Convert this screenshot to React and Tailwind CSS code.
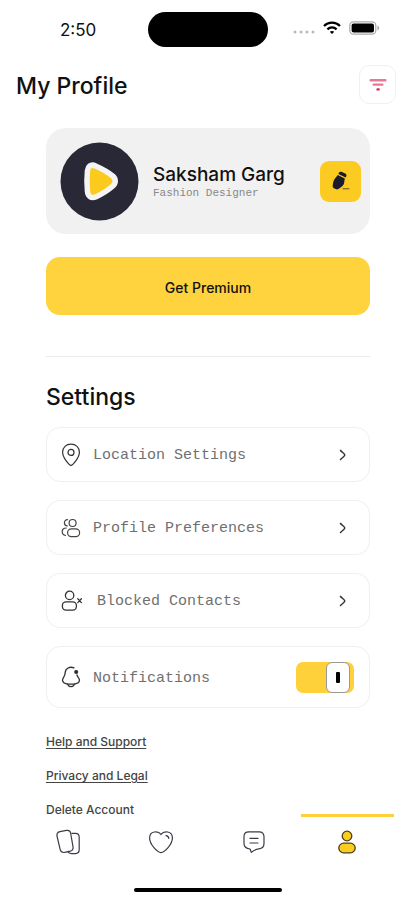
import React, { useState } from 'react';

const PinIcon = () => (
  <svg width="20" height="24" viewBox="0 0 20 24" fill="none" stroke="#333" strokeWidth="1.2">
    <path d="M10 22.3C8.4 22.3 1.6 14.8 1.6 9.2C1.6 4.4 5.2 1.2 10 1.2S18.4 4.4 18.4 9.2C18.4 14.8 11.6 22.3 10 22.3Z" />
    <circle cx="10" cy="9.4" r="3" />
  </svg>
);

const PeopleIcon = () => (
  <svg width="20" height="20" viewBox="0 0 20 20" fill="none" stroke="#444" strokeWidth="1.2" strokeLinecap="round">
    <circle cx="11.6" cy="5" r="3.5" />
    <rect x="6.6" y="10.8" width="12" height="7.8" rx="3.8" />
    <path d="M6.6 1.6C4.4 1.6 3.4 3.2 3.4 4.8C3.4 6.6 4.4 7.8 6.2 7.9" />
    <path d="M5.2 10C2.6 10 1.2 11.6 1.2 13.6C1.2 15.8 2.4 17.2 4.4 17.4" />
  </svg>
);

const BlockedIcon = () => (
  <svg width="24" height="22" viewBox="0 0 24 22" fill="none" stroke="#333" strokeWidth="1.3" strokeLinecap="round">
    <circle cx="8.6" cy="5.4" r="4.2" />
    <rect x="1.4" y="11.8" width="14" height="8.4" rx="3.6" />
    <path d="M16.8 8.8L20.4 12.6M20.4 8.8L16.8 12.6" />
  </svg>
);

const BellIcon = () => (
  <svg width="20" height="22" viewBox="0 0 20 22" fill="none" stroke="#333" strokeWidth="1.3" strokeLinecap="round">
    <path d="M13 1.8C8.6 .2 4.4 2.4 4.2 6.6C4.1 8.6 3.8 9.6 2.6 11.4C.6 14.4 1.6 16.8 4.8 17.6C8.2 18.4 11.8 18.4 15.2 17.6C18.4 16.8 19.4 14.4 17.4 11.6C16.6 10.4 16.2 9.8 16 9" />
    <path d="M6.4 18.2C8 21.4 12 21.4 13.6 18.2" />
    <circle cx="15.2" cy="6" r="1.4" fill="#222" />
  </svg>
);

const ChevronIcon = () => (
  <svg width="8" height="12" viewBox="0 0 8 12" fill="none" stroke="#333" strokeWidth="1.5">
    <path d="M1.2 1C2.4 3 5.8 4.6 5.8 6S2.4 9 1.2 11" />
  </svg>
);

const CardsIcon = () => (
  <svg width="26" height="26" viewBox="0 0 26 26" fill="none" stroke="#3b3b48" strokeWidth="1.2">
    <path d="M5 2.6L11.4 1.4C13.6 1 15.2 2 15.6 4L18 17.6C18.4 20 17.4 21.6 15.2 22.2L9.6 23.4C7.4 23.8 5.8 22.6 5.2 20.6L2 7C1.5 4.6 2.8 3 5 2.6Z" />
    <path d="M16.4 4.4H20.4C22.8 4.4 24.2 5.8 24.2 8.2V20.6C24.2 23.2 22.8 24.6 20.4 24.6H16.6C14.8 24.6 13.4 24 12.8 22.8" />
  </svg>
);

const HeartIcon = () => (
  <svg width="26" height="24" viewBox="0 0 26 24" fill="none" stroke="#3b3b48" strokeWidth="1.2" strokeLinecap="round">
    <path d="M13 4.4C10.4 .8 1.6 .4 1.6 8C1.6 14.4 9.4 22.6 13 22.6S24.4 14.4 24.4 8C24.4 .4 15.6 .8 13 4.4Z" />
    <path d="M18 5.6C19.6 5.8 20.6 6.8 20.8 8.4" />
  </svg>
);

const ChatIcon = () => (
  <svg width="24" height="24" viewBox="0 0 24 24" fill="none" stroke="#3b3b48" strokeWidth="1.2" strokeLinecap="round" strokeLinejoin="round">
    <path d="M7 1.8H17C20.4 1.8 22 3.4 22 6.8V13.6C22 17 20.4 18.6 17 18.9C14 19.2 12 20 9.4 22.4L8 19C4 18.6 2 17.2 2 13.6V6.8C2 3.4 3.6 1.8 7 1.8Z" />
    <path d="M8 8.4H16M8 13H16" />
  </svg>
);

const PersonIcon = () => (
  <svg width="20" height="24" viewBox="0 0 20 24" fill="#f9cc1f" stroke="#4a3f1c" strokeWidth="1.3">
    <circle cx="10" cy="6" r="4.8" />
    <rect x="1.8" y="13.2" width="16.4" height="9.6" rx="4.8" />
  </svg>
);

const settings = [
  { label: 'Location Settings', icon: PinIcon },
  { label: 'Profile Preferences', icon: PeopleIcon },
  { label: 'Blocked Contacts', icon: BlockedIcon },
];

const links = ['Help and Support', 'Privacy and Legal', 'Delete Account'];

const tabs = [
  { label: 'Cards', icon: CardsIcon },
  { label: 'Likes', icon: HeartIcon },
  { label: 'Chats', icon: ChatIcon },
  { label: 'Profile', icon: PersonIcon },
];

const StatusBar = () => (
  <div className="grid grid-cols-[1fr_120px_1fr] items-center pt-3">
    <span className="pl-[60px] text-[17px] leading-6">2:50</span>
    <div className="h-[35px] rounded-full bg-black" />
    <div className="flex items-center justify-end gap-2 pr-[35px] pb-1">
      <svg width="22" height="4" viewBox="0 0 22 4" fill="#bbb" className="mt-2">
        <circle cx="2" cy="2" r="1.5" />
        <circle cx="8" cy="2" r="1.5" />
        <circle cx="14" cy="2" r="1.5" />
        <circle cx="20" cy="2" r="1.5" />
      </svg>
      <svg width="18" height="14" viewBox="0 0 18 14" fill="none" stroke="#000" strokeWidth="2.2">
        <path d="M1 5C5.4 .6 12.6 .6 17 5" />
        <path d="M4.4 8.4C7 5.8 11 5.8 13.6 8.4" />
        <path d="M6.8 10.8C8 9.7 10 9.7 11.2 10.8L9 13Z" fill="#000" stroke="none" />
      </svg>
      <svg width="31" height="14" viewBox="0 0 31 14">
        <rect x="0.8" y="0.8" width="26" height="12.4" rx="3.6" fill="none" stroke="#aaa" strokeWidth="1.2" />
        <rect x="2.6" y="2.6" width="22.4" height="8.8" rx="2" fill="#000" />
        <path d="M28.4 4.6C30.8 5.4 30.8 8.6 28.4 9.4Z" fill="#aaa" />
      </svg>
    </div>
  </div>
);

const App = () => {
  const [notifications, setNotifications] = useState(true);

  return (
    <div className="flex h-screen flex-col bg-white font-['Inter',sans-serif] text-[#111]">
      <StatusBar />

      <header className="flex items-end justify-between pt-[18px] pr-[19px] pl-4">
        <h1 className="text-[23px] leading-9 font-medium">My Profile</h1>
        <button aria-label="Filter" className="flex h-[39px] w-[37px] items-center justify-center rounded-[10px] border border-[#f0f0f0]">
          <svg width="18" height="14" viewBox="0 0 18 14">
            <rect x="0.5" y="1" width="17" height="2.6" rx="1" fill="#ea7895" />
            <rect x="3.5" y="5.6" width="11" height="2.2" rx="1" fill="#ea7895" />
            <rect x="7.4" y="10.2" width="3.4" height="2.4" rx="1.2" fill="#e0254f" />
          </svg>
        </button>
      </header>

      <main className="mt-6 min-h-0 flex-1 overflow-y-auto pr-[45px] pl-[46px] [scrollbar-width:none]">
        <section className="flex h-[106px] items-center rounded-[20px] bg-[#f1f1f1] pr-[9px] pl-[14px]">
          <svg width="79" height="79" viewBox="0 0 79 79" className="shrink-0">
            <circle cx="39.5" cy="39.5" r="39" fill="#282836" />
            <path d="M34.5 26.5C31.5 25 30.5 26.5 30.2 29C29.6 35 29.6 43 30.2 49C30.5 52.5 32 53.6 35 52.2C41 49.4 47 45.6 51 42C53 40.2 53 38 51 36.2C46.6 32.4 40 29 34.5 26.5Z" fill="#fcc91d" stroke="#f4f4f4" strokeWidth="11" strokeLinejoin="round" />
            <path d="M34.5 26.5C31.5 25 30.5 26.5 30.2 29C29.6 35 29.6 43 30.2 49C30.5 52.5 32 53.6 35 52.2C41 49.4 47 45.6 51 42C53 40.2 53 38 51 36.2C46.6 32.4 40 29 34.5 26.5Z" fill="#fcc91d" />
          </svg>
          <div className="ml-[14px] min-w-0 flex-1">
            <h2 className="text-[19px] leading-6 font-medium whitespace-nowrap">Saksham Garg</h2>
            <p className="font-['Liberation_Mono',monospace] text-[11px] leading-3 text-[#888]">Fashion Designer</p>
          </div>
          <button aria-label="Edit profile" className="flex size-[41px] shrink-0 items-center justify-center rounded-[9px] bg-[#fccb22]">
            <svg width="20" height="22" viewBox="0 0 20 22" fill="#1b1b2c">
              <path d="M8 2.6C8.6 1.6 9.8 1.5 11 2L14.2 3.4C15.4 4 15.8 5.2 15.2 6.4L14.6 7.4L7.4 4Z" />
              <path d="M6.8 5L13.8 8.4L13.2 12.6C12.8 15 11.4 16.4 9.6 17.6L7.4 19C6 19.8 4.8 19.4 3.4 18.6C2 17.8 1.5 16.8 1.7 15.2L2.2 12.4C2.5 10.6 3.2 9.4 4.4 7.9Z" />
              <path d="M11.6 18H18.4V19.4H11.6Z" opacity="0.5" />
            </svg>
          </button>
        </section>

        <button className="mt-[23px] h-[58px] w-full rounded-[14px] bg-[#fed33d] pt-0.5 text-[14px] font-medium">
          Get Premium
        </button>

        <hr className="mt-[41px] border-[#ececec]" />

        <h2 className="mt-6 text-[23px] leading-8 font-medium">Settings</h2>

        <div className="mt-[14px] flex flex-col gap-[18px] font-['Liberation_Mono',monospace] text-[15px] text-[#707070]">
          {settings.map(({ label, icon: Icon }) => (
            <button key={label} className="flex h-[55px] w-full items-center gap-3 rounded-[14px] border border-[#efefef] pr-[22px] pl-[14px]">
              <Icon />
              <span className="flex-1 pt-1 text-left">{label}</span>
              <ChevronIcon />
            </button>
          ))}

          <label className="flex h-[62px] items-center gap-3 rounded-[14px] border border-[#efefef] pr-[15px] pl-[14px]">
            <BellIcon />
            <span className="flex-1 pt-1">Notifications</span>
            <input
              type="checkbox"
              role="switch"
              checked={notifications}
              onChange={(e) => setNotifications(e.target.checked)}
              className="peer sr-only"
            />
            <span className="flex h-[31px] w-[58px] items-center rounded-[7px] bg-[#ddd] px-1 peer-checked:justify-end peer-checked:bg-[#fed03a]">
              <span className="flex h-[31px] w-6 items-center justify-center rounded-[6px] border border-[#999] bg-white">
                <span className="h-[11px] w-1 rounded-[1px] bg-black" />
              </span>
            </span>
          </label>
        </div>

        <div className="mt-[27px] flex flex-col items-start gap-5 text-[12px] leading-[14px] font-medium text-[#444]">
          {links.map((link) => (
            <a key={link} href="#" className="underline underline-offset-2">
              {link}
            </a>
          ))}
        </div>
      </main>

      <nav className="grid shrink-0 grid-cols-4 px-[21px]">
        {tabs.map(({ label, icon: Icon }) => (
          <button
            key={label}
            aria-label={label}
            className={`flex h-[52px] items-center justify-center border-t-3 ${label === 'Profile' ? 'border-[#fed03a]' : 'border-transparent'}`}
          >
            <Icon />
          </button>
        ))}
      </nav>

      <div className="mx-auto mt-[22px] mb-2 h-1 w-[148px] shrink-0 rounded-full bg-black" />
    </div>
  );
};

export default App;
